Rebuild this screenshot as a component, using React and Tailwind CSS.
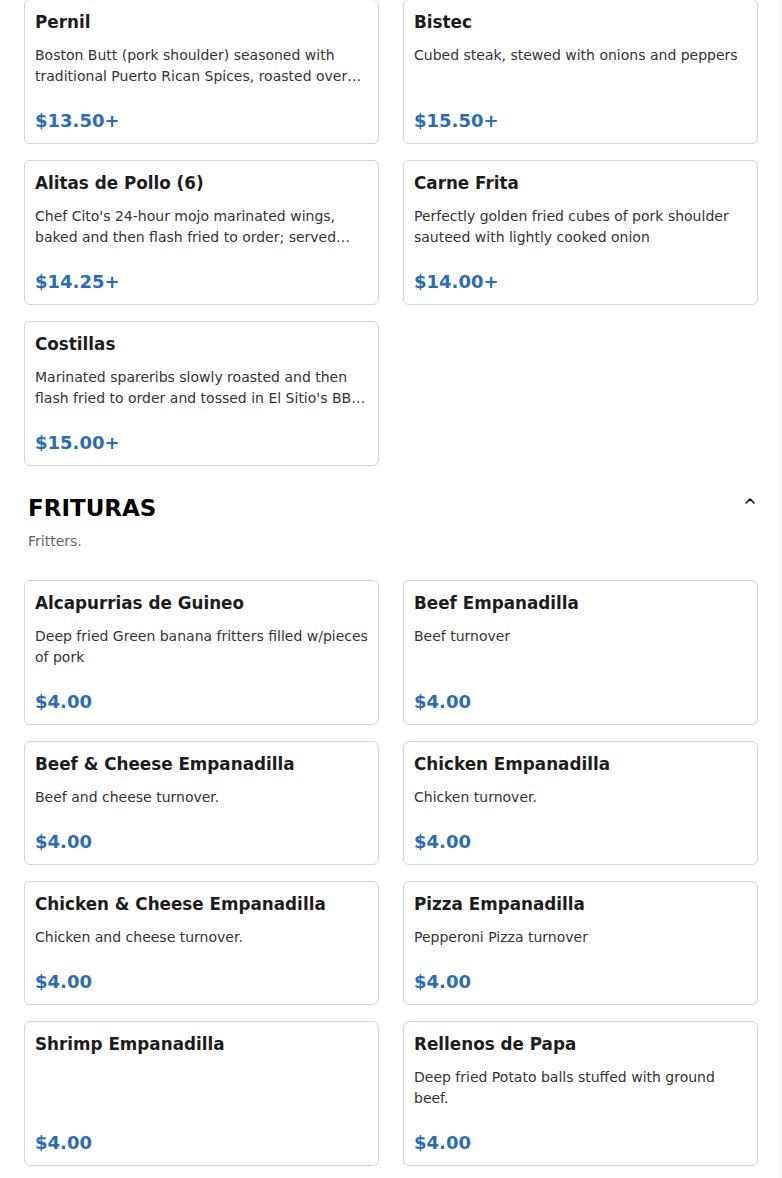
import { ChevronUp } from "lucide-react"

const entrees = [
    { name: "Pernil", desc: "Boston Butt (pork shoulder) seasoned with traditional Puerto Rican Spices, roasted over low heat for hours until tender and juicy", price: "$13.50+" },
    { name: "Bistec", desc: "Cubed steak, stewed with onions and peppers", price: "$15.50+" },
    { name: "Alitas de Pollo (6)", desc: "Chef Cito's 24-hour mojo marinated wings, baked and then flash fried to order; served with your choice of sauce", price: "$14.25+" },
    { name: "Carne Frita", desc: "Perfectly golden fried cubes of pork shoulder sauteed with lightly cooked onion", price: "$14.00+" },
    { name: "Costillas", desc: "Marinated spareribs slowly roasted and then flash fried to order and tossed in El Sitio's BBQ sauce", price: "$15.00+" },
]

const frituras = [
    { name: "Alcapurrias de Guineo", desc: "Deep fried Green banana fritters filled w/pieces of pork", price: "$4.00" },
    { name: "Beef Empanadilla", desc: "Beef turnover", price: "$4.00" },
    { name: "Beef & Cheese Empanadilla", desc: "Beef and cheese turnover.", price: "$4.00" },
    { name: "Chicken Empanadilla", desc: "Chicken turnover.", price: "$4.00" },
    { name: "Chicken & Cheese Empanadilla", desc: "Chicken and cheese turnover.", price: "$4.00" },
    { name: "Pizza Empanadilla", desc: "Pepperoni Pizza turnover", price: "$4.00" },
    { name: "Shrimp Empanadilla", desc: "", price: "$4.00" },
    { name: "Rellenos de Papa", desc: "Deep fried Potato balls stuffed with ground beef.", price: "$4.00" },
]

function ItemCard({ name, desc, price }) {
    return (
        <div className="flex flex-col border border-[#d4d4d4] rounded-md bg-white px-[10px] pt-[11px] pb-[9px]">
            {/* title */}
            <h3 className="text-[16.8px] leading-[22px] font-bold text-[#1c1c1c]">{name}</h3>

            {/* description */}
            {desc && (
                <p className="mt-[12px] text-[14px] leading-[21px] text-[#333] line-clamp-2">{desc}</p>
            )}

            {/* price */}
            <div className="mt-auto pt-[21px] text-[18px] leading-[26px] font-bold text-[#2a6db5]">{price}</div>
        </div>
    )
}

export default function App() {
    return (
        <div className="relative w-full min-h-[1178px] bg-white overflow-hidden font-['DejaVu_Sans',sans-serif]">
            {/* faint edge on the right */}
            <div className="absolute top-0 bottom-0 right-[1px] w-px bg-[#efefef]" />

            <div className="px-6">

                {/* Entrees grid */}
                <div className="-mt-px grid grid-cols-2 gap-x-6 gap-y-4">
                    {entrees.map((item) => (
                        <ItemCard key={item.name} {...item} />
                    ))}
                </div>

                {/* Frituras header */}
                <div className="mt-[26px] pl-1 flex items-start justify-between">
                    <div>
                        <h2 className="text-[23px] leading-[32px] font-bold text-black">FRITURAS</h2>
                        <p className="mt-[7px] text-[14px] leading-[20px] text-[#666]">Fritters.</p>
                    </div>
                    <ChevronUp size={16} strokeWidth={2.2} className="mt-[1px] text-black" />
                </div>

                <div className="mt-[29px] grid grid-cols-2 gap-x-6 gap-y-4 pb-4">
                    {frituras.map((item) => (
                        <ItemCard key={item.name} {...item} />
                    ))}
                </div>
            </div>
        </div>
    )
}
